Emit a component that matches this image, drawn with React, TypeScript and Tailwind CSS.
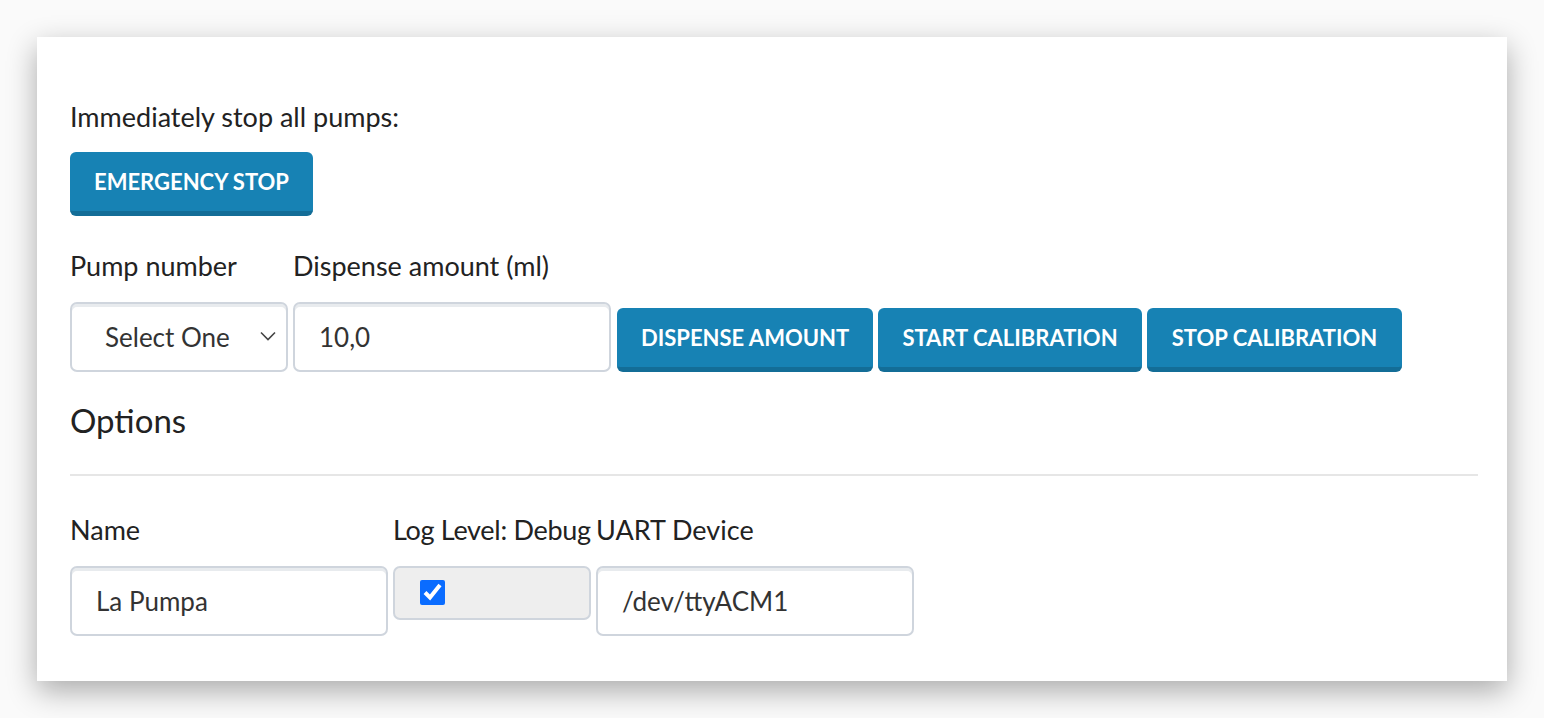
import React, { useState } from 'react';

const font = "font-['Lato','Noto_Sans',sans-serif]";

const btn =
  "h-[64px] rounded-[6px] bg-[#1782b4] border-b-[5px] border-[#136d97] px-[24px] text-white font-bold uppercase text-[22px] leading-none whitespace-nowrap";

const field =
  "h-[70px] rounded-[7px] border-2 border-[#cfd5dd] bg-white shadow-[inset_0_3px_0_#e8ebee] px-[24px] text-[26px] text-[#333] outline-none";

const label = "text-[27px] leading-[32px] mb-[20px] whitespace-nowrap";

export default function App() {
  const [pump, setPump] = useState('');
  const [amount, setAmount] = useState('10,0');
  const [name, setName] = useState('La Pumpa');
  const [debug, setDebug] = useState(true);
  const [uart, setUart] = useState('/dev/ttyACM1');

  return (
    <div className={`min-h-[718px] bg-[#fafafa] pt-[37px] pl-[37px] ${font}`}>
      <div className="w-[1470px] h-[644px] bg-white shadow-[0_10px_28px_rgba(0,0,0,0.32)] pl-[33px] pr-[29px] pt-[64px] text-[#222]">
        <p className="text-[27px] leading-[32px]">Immediately stop all pumps:</p>
        <button className={`${btn} mt-[19px] w-[243px]`}>Emergency Stop</button>

        {/* manual dispense */}
        <div className="flex gap-[5px] mt-[34px] items-end">
          <div className="flex flex-col">
            <label className={label}>Pump number</label>
            <div className="relative">
              <select
                value={pump}
                onChange={(e) => setPump(e.target.value)}
                className={`${field} w-[218px] appearance-none pl-[33px]`}
              >
                <option value="">Select One</option>
                <option value="1">1</option>
                <option value="2">2</option>
              </select>
              <svg className="absolute right-[12px] top-[28px] w-[16px] h-[12px]" viewBox="0 0 16 10" fill="none">
                <path d="M1 1.5l7 7 7-7" stroke="#444" strokeWidth="1.6" />
              </svg>
            </div>
          </div>
          <div className="flex flex-col">
            <label className={label}>Dispense amount (ml)</label>
            <input
              value={amount}
              onChange={(e) => setAmount(e.target.value)}
              className={`${field} w-[318px]`}
            />
          </div>
          <button className={`${btn} w-[256px] ml-[1px]`}>Dispense Amount</button>
          <button className={`${btn} w-[264px]`}>Start Calibration</button>
          <button className={`${btn} w-[255px]`}>Stop Calibration</button>
        </div>

        <h2 className="text-[33px] leading-[40px] mt-[28px]">Options</h2>
        <hr className="mt-[34px] border-t-2 border-[#e6e6e6]" />

        {/* options */}
        <div className="flex gap-[5px] mt-[38px] items-start">
          <div className="flex flex-col">
            <label className={label}>Name</label>
            <input
              value={name}
              onChange={(e) => setName(e.target.value)}
              className={`${field} w-[318px]`}
            />
          </div>
          <div className="flex flex-col w-[198px]">
            <label className={`${label} tracking-[-0.3px]`}>Log Level: Debug</label>
            <div className="h-[54px] w-[198px] rounded-[7px] border-2 border-[#cfd5dd] bg-[#eeeeee] pl-[25px] pt-[12px]">
              <input
                type="checkbox"
                checked={debug}
                onChange={(e) => setDebug(e.target.checked)}
                className="w-[25px] h-[25px] accent-[#0a6cff]"
              />
            </div>
          </div>
          <div className="flex flex-col">
            <label className={label}>UART Device</label>
            <input
              value={uart}
              onChange={(e) => setUart(e.target.value)}
              className={`${field} w-[318px]`}
            />
          </div>
        </div>
      </div>
    </div>
  );
}
